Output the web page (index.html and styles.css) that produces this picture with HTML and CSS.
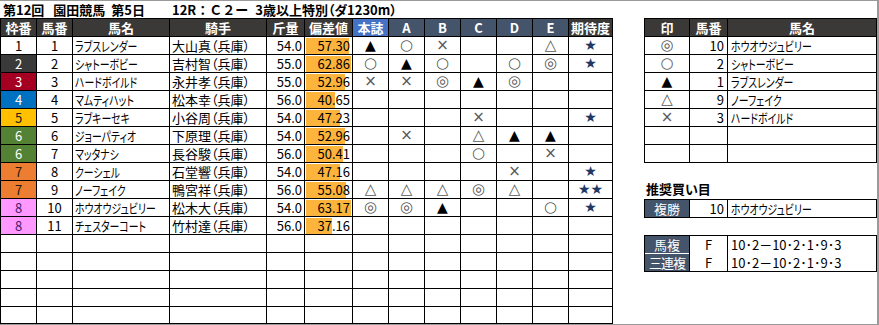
FILE: index.html
```html
<!DOCTYPE html>
<html lang="ja">
<head>
<meta charset="utf-8">
<title>第12回 園田競馬 第5日 12R</title>
<link rel="stylesheet" href="styles.css">
</head>
<body>
<div class="sheet">
  <div class="title"><span>第12回</span><span class="t2">園田競馬</span><span class="t3">第5日</span><span class="t4">12R：Ｃ２ー</span><span class="t5">3歳以上特別（ダ1230m）</span></div>
  <div class="body">
    <div class="main">
      <div class="h">枠番</div><div class="h">馬番</div><div class="h">馬名</div><div class="h">騎手</div><div class="h">斤量</div><div class="h">偏差値</div><div class="hb">本誌</div><div class="hs">A</div><div class="hs">B</div><div class="hs">C</div><div class="hs">D</div><div class="hs">E</div><div class="h">期待度</div>

      <div class="w1">1</div><div>1</div><div class="l"><span class="nm">ラブスレンダー</span></div><div class="l">大山真（兵庫）</div><div class="r">54.0</div><div class="bar" style="--w:43px">57.30</div><div class="k">▲</div><div class="g">○</div><div class="g">×</div><div></div><div></div><div class="g">△</div><div class="s">★</div>

      <div class="w2">2</div><div>2</div><div class="l"><span class="nm">シャトーボビー</span></div><div class="l">吉村智（兵庫）</div><div class="r">55.0</div><div class="bar" style="--w:45px">62.86</div><div class="g">○</div><div class="k">▲</div><div class="g">○</div><div></div><div class="g">○</div><div class="g">◎</div><div class="s">★</div>

      <div class="w3">3</div><div>3</div><div class="l"><span class="nm">ハードボイルド</span></div><div class="l">永井孝（兵庫）</div><div class="r">55.0</div><div class="bar" style="--w:39px">52.96</div><div class="g">×</div><div class="g">×</div><div class="g">◎</div><div class="k">▲</div><div class="g">◎</div><div></div><div></div>

      <div class="w4">4</div><div>4</div><div class="l"><span class="nm">マムティハット</span></div><div class="l">松本幸（兵庫）</div><div class="r">56.0</div><div class="bar" style="--w:29px">40.65</div><div></div><div></div><div></div><div></div><div></div><div></div><div></div>

      <div class="w5">5</div><div>5</div><div class="l"><span class="nm">ラブキーセキ</span></div><div class="l">小谷周（兵庫）</div><div class="r">54.0</div><div class="bar" style="--w:34px">47.23</div><div></div><div></div><div></div><div class="g">×</div><div></div><div></div><div class="s">★</div>

      <div class="w6">6</div><div>6</div><div class="l"><span class="nm">ジョーパティオ</span></div><div class="l">下原理（兵庫）</div><div class="r">54.0</div><div class="bar" style="--w:39px">52.96</div><div></div><div class="g">×</div><div></div><div class="g">△</div><div class="k">▲</div><div class="k">▲</div><div></div>

      <div class="w6">6</div><div>7</div><div class="l"><span class="nm">マッタナシ</span></div><div class="l">長谷駿（兵庫）</div><div class="r">56.0</div><div class="bar" style="--w:37px">50.41</div><div></div><div></div><div></div><div class="g">○</div><div></div><div class="g">×</div><div></div>

      <div class="w7">7</div><div>8</div><div class="l"><span class="nm">クーシェル</span></div><div class="l">石堂響（兵庫）</div><div class="r">54.0</div><div class="bar" style="--w:34px">47.16</div><div></div><div></div><div></div><div></div><div class="g">×</div><div></div><div class="s">★</div>

      <div class="w7">7</div><div>9</div><div class="l"><span class="nm">ノーフェイク</span></div><div class="l">鴨宮祥（兵庫）</div><div class="r">56.0</div><div class="bar" style="--w:40px">55.08</div><div class="g">△</div><div class="g">△</div><div class="g">△</div><div class="g">◎</div><div class="g">△</div><div></div><div class="s">★★</div>

      <div class="w8">8</div><div>10</div><div class="l"><span class="nm">ホウオウジュビリー</span></div><div class="l">松木大（兵庫）</div><div class="r">54.0</div><div class="bar" style="--w:45px">63.17</div><div class="g">◎</div><div class="g">◎</div><div class="k">▲</div><div></div><div></div><div class="g">○</div><div class="s">★</div>

      <div class="w8">8</div><div>11</div><div class="l"><span class="nm">チェスターコート</span></div><div class="l">竹村達（兵庫）</div><div class="r">56.0</div><div class="bar" style="--w:26px">37.16</div><div></div><div></div><div></div><div></div><div></div><div></div><div></div>

      <div></div><div></div><div></div><div></div><div></div><div></div><div></div><div></div><div></div><div></div><div></div><div></div><div></div>
      <div></div><div></div><div></div><div></div><div></div><div></div><div></div><div></div><div></div><div></div><div></div><div></div><div></div>
      <div></div><div></div><div></div><div></div><div></div><div></div><div></div><div></div><div></div><div></div><div></div><div></div><div></div>
      <div></div><div></div><div></div><div></div><div></div><div></div><div></div><div></div><div></div><div></div><div></div><div></div><div></div>
      <div></div><div></div><div></div><div></div><div></div><div></div><div></div><div></div><div></div><div></div><div></div><div></div><div></div>
    </div>

    <div class="side">
      <div class="pick">
        <div class="h">印</div><div class="h">馬番</div><div class="h">馬名</div>
        <div class="g">◎</div><div class="r">10</div><div class="l"><span class="nm">ホウオウジュビリー</span></div>
        <div class="g">○</div><div class="r">2</div><div class="l"><span class="nm">シャトーボビー</span></div>
        <div class="k">▲</div><div class="r">1</div><div class="l"><span class="nm">ラブスレンダー</span></div>
        <div class="g">△</div><div class="r">9</div><div class="l"><span class="nm">ノーフェイク</span></div>
        <div class="g">×</div><div class="r">3</div><div class="l"><span class="nm">ハードボイルド</span></div>
        <div></div><div></div><div></div>
        <div></div><div></div><div></div>
      </div>
      <div class="label">推奨買い目</div>
      <div class="buy">
        <div class="lbl">複勝</div><div class="r">10</div><div class="l"><span class="nm">ホウオウジュビリー</span></div>
      </div>
      <div class="buy2">
        <div class="lbl first">馬複</div><div class="c">F</div><div class="l combo">10･2－10･2･1･9･3</div>
        <div class="lbl narrow">三連複</div><div class="c">F</div><div class="l combo">10･2－10･2･1･9･3</div>
      </div>
    </div>
  </div>
</div>
</body>
</html>
```

FILE: styles.css
```css
* {
  box-sizing: border-box;
  margin: 0;
  padding: 0;
}

body {
  width: 879px;
  height: 325px;
  overflow: hidden;
  background: #fff;
  color: #000;
  font-family: "Noto Sans CJK JP", "Noto Sans", sans-serif;
  font-size: 13px;
  font-feature-settings: "palt";
}

.sheet {
  width: 879px;
  height: 325px;
  border-top: 1px solid #9a9a9a;
  border-right: 2px solid #9a9a9a;
  border-bottom: 1px solid #9a9a9a;
  display: flex;
  flex-direction: column;
}

.title {
  height: 17px;
  line-height: 17px;
  padding-left: 3px;
  font-weight: bold;
  white-space: nowrap;
}

.title .t2 { margin-left: 9px; }
.title .t3 { margin-left: 6px; }
.title .t4 { margin-left: 27px; font-feature-settings: normal; }
.title .t5 { margin-left: 7px; }

.body {
  display: flex;
  align-items: flex-start;
}

/* main race table */
.main {
  display: grid;
  grid-template-columns: 35px 35px 96px 96px 37px 47px repeat(6, 35px) 43px;
  grid-template-rows: repeat(16, 17px) 16px;
  gap: 1px;
  padding: 1px;
  background: #000;
}

.main > div,
.pick > div,
.buy > div,
.buy2 > div {
  background: #fff;
  line-height: 17px;
  text-align: center;
  white-space: nowrap;
  overflow: hidden;
}

.h {
  background: #3b3838 !important;
  color: #fff;
  font-weight: bold;
}

.hb {
  background: #4472c4 !important;
  color: #fff;
  font-weight: bold;
}

.hs {
  background: #44546a !important;
  color: #fff;
  font-weight: bold;
}

.l {
  text-align: left !important;
  padding-left: 2px;
}

.r {
  text-align: right !important;
  padding-right: 2px;
}

.nm {
  display: inline-block;
  transform: scaleX(0.76);
  transform-origin: 0 50%;
}

.g,
.k,
.s {
  font-family: "DejaVu Sans", sans-serif;
  font-feature-settings: normal;
}

.g { color: #595959; font-size: 15px; }
.k { color: #000; font-size: 14px; }
.s { color: #1f3864; font-size: 14px; }

.w1 { background: #fff !important; }
.w2 { background: #3a3a3a !important; color: #fff; }
.w3 { background: #a50021 !important; color: #fff; }
.w4 { background: #0070c0 !important; color: #fff; }
.w5 { background: #ffc000 !important; color: #222; }
.w6 { background: #548235 !important; color: #fff; }
.w7 { background: #ed7d31 !important; color: #2a1a10; }
.w8 { background: #ff99ff !important; color: #4a1a6a; }

.bar {
  text-align: right !important;
  padding-right: 2px;
  background: linear-gradient(#fdb43c, #fdb43c) no-repeat 1px 1px / var(--w) 16px #fff !important;
}

/* right side */
.side {
  padding-left: 31px;
  display: flex;
  flex-direction: column;
}

.pick {
  display: grid;
  grid-template-columns: 44px 37px 148px;
  grid-template-rows: repeat(8, 17px);
  gap: 1px;
  padding: 1px;
  background: #000;
}

.pick .r,
.buy .r {
  padding-right: 3px;
}

.pick .l,
.buy .l {
  padding-left: 3px;
}

.label {
  height: 36px;
  padding-top: 17px;
  padding-left: 2px;
  line-height: 17px;
  font-weight: bold;
}

.buy {
  display: grid;
  grid-template-columns: 44px 37px 148px;
  grid-template-rows: 17px;
  gap: 1px;
  padding: 1px;
  background: #000;
}

.buy2 {
  margin-top: 17px;
  display: grid;
  grid-template-columns: 44px 37px 148px;
  grid-template-rows: 18px 17px;
  column-gap: 1px;
  padding: 1px;
  background: #000;
}

.lbl {
  background: #44546a !important;
  color: #fff;
}

.buy2 .first {
  border-bottom: 1px solid #fff;
}

.narrow {
  letter-spacing: -1px;
}

.combo {
  padding-left: 3px !important;
}
```
